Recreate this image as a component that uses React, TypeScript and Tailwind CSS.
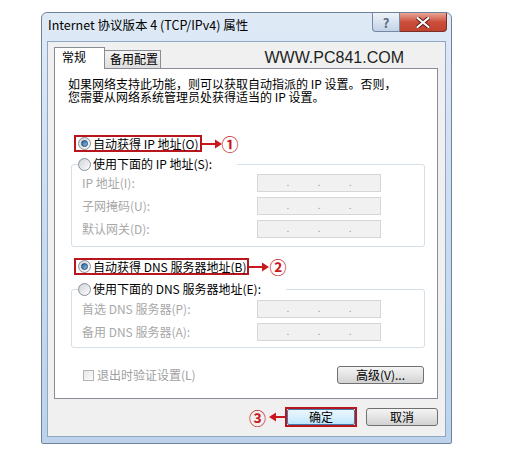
import React from "react";

function Radio({ checked }: { checked?: boolean }) {
  return (
    <span className="flex h-[13px] w-[13px] shrink-0 items-center justify-center rounded-full border border-[#8c8f94] bg-gradient-to-br from-[#cfd3d8] to-[#fdfdfd]">
      {checked && (
        <span className="h-[7px] w-[7px] rounded-full border border-[#1c4a78] bg-gradient-to-br from-[#2a5f94] to-[#8cc6f0]" />
      )}
    </span>
  );
}

function IpField() {
  return (
    <div className="flex h-[18px] w-[124px] items-end border border-[#d6d6d6] bg-[#f1f1f1] pb-[4px] text-[10px] leading-none text-[#9c9c9c]">
      <span className="flex-1" />
      <span>.</span>
      <span className="flex-1" />
      <span>.</span>
      <span className="flex-1" />
      <span>.</span>
      <span className="flex-1" />
    </div>
  );
}

function Row({ label }: { label: string }) {
  return (
    <div className="flex h-[18px] items-center">
      <span className="w-[179px] pl-[4px] text-[12px] leading-none text-[#a8a8a8]">{label}</span>
      <IpField />
    </div>
  );
}

function ArrowRight() {
  return (
    <svg width="20" height="10" viewBox="0 0 20 10" className="shrink-0">
      <line x1="0" y1="5" x2="14" y2="5" stroke="#c8191f" strokeWidth="2" />
      <polygon points="13,0.5 20,5 13,9.5" fill="#c8191f" />
    </svg>
  );
}

function ArrowLeft() {
  return (
    <svg width="16" height="10" viewBox="0 0 16 10" className="shrink-0">
      <polygon points="7,0.5 0,5 7,9.5" fill="#c8191f" />
      <line x1="6" y1="5" x2="16" y2="5" stroke="#c8191f" strokeWidth="2" />
    </svg>
  );
}

function WinButton({ children, w }: { children: React.ReactNode; w: string }) {
  return (
    <div
      className={`flex h-[18px] ${w} items-center justify-center rounded-[3px] border border-[#707070] bg-gradient-to-b from-[#f4f4f4] via-[#e4e4e4] to-[#d2d2d2] text-[12px] leading-none text-black`}
    >
      {children}
    </div>
  );
}

export default function App() {
  return (
    <div className="h-[450px] w-[520px] bg-white pl-[41px] pt-[12px] font-['Noto_Sans_CJK_SC',sans-serif]">
      <div className="flex h-[432px] w-[411px] flex-col rounded-t-[6px] rounded-b-[2px] border border-[#70829a] bg-gradient-to-b from-[#dfeaf6] via-[#c9dcf1] to-[#bdd3ec]">
        {/* title bar */}
        <div className="flex h-[28px] shrink-0 items-start justify-between pl-[6px] pr-[4px]">
          <div className="pt-[4px] text-[12.5px] leading-[16px] text-black">
            Internet 协议版本 4 (TCP/IPv4) 属性
          </div>
          <div className="flex">
            <div className="flex h-[19px] w-[28px] items-center justify-center rounded-bl-[4px] border border-t-0 border-[#7489a6] bg-gradient-to-b from-[#eef3fa] to-[#c3d2e6] text-[13px] font-bold leading-none text-[#5a6a82]">
              ?
            </div>
            <div className="flex h-[19px] w-[47px] items-center justify-center rounded-br-[4px] border border-t-0 border-l-0 border-[#7a2f28] bg-gradient-to-b from-[#e8a597] via-[#cc4c3b] to-[#c0432f]">
              <svg width="14" height="11" viewBox="0 0 14 11">
                <path
                  d="M1.5 1 L12.5 10 M12.5 1 L1.5 10"
                  stroke="#5a1d17"
                  strokeWidth="4"
                  strokeLinecap="round"
                />
                <path
                  d="M1.5 1 L12.5 10 M12.5 1 L1.5 10"
                  stroke="#ffffff"
                  strokeWidth="2.2"
                  strokeLinecap="round"
                />
              </svg>
            </div>
          </div>
        </div>

        {/* client area */}
        <div className="mx-[5px] mb-[6px] flex flex-1 flex-col border border-[#90a6c3] bg-[#f0f0f0] pl-[6px] pr-[7px] pt-[5px]">
          {/* tabs */}
          <div className="flex h-[21px] items-end">
            <div className="relative z-10 -mb-px h-[22px] w-[51px] border border-b-0 border-[#898c95] bg-white pl-[7px] pt-[2px] text-[12px] leading-[14px] text-black">
              常规
            </div>
            <div className="-ml-px h-[18px] w-[57px] border border-b-0 border-[#898c95] bg-gradient-to-b from-[#f4f4f4] to-[#dedede] pl-[5px] pt-[1px] text-[12px] leading-[14px] text-black">
              备用配置
            </div>
            <div className="ml-auto mr-[34px] self-center font-['Liberation_Sans',sans-serif] text-[16px] leading-none text-[#1e1e1e]">
              WWW.PC841.COM
            </div>
          </div>

          {/* panel */}
          <div className="flex h-[331px] flex-col border border-[#898c95] bg-white pl-[13px] pr-[12px]">
            <div className="mt-[8px] flex flex-col whitespace-nowrap text-[12px] text-black">
              <div className="h-[13px] leading-[13px]">如果网络支持此功能，则可以获取自动指派的 IP 设置。否则，</div>
              <div className="h-[13px] leading-[13px]">您需要从网络系统管理员处获得适当的 IP 设置。</div>
            </div>

            <div className="ml-[6px] mt-[32px] flex items-center">
              <div className="flex h-[17px] items-center gap-[2px] border-2 border-[#b8161c] pl-[2px] pr-[1px] text-[12px] leading-none text-black">
                <Radio checked />
                <span>自动获得 IP 地址(O)</span>
              </div>
              <ArrowRight />
              <span className="text-[17px] font-bold leading-none text-[#c8191f]">①</span>
            </div>

            <fieldset className="ml-[3px] mt-[4px] rounded-[3px] border border-[#d5dfe5] pb-[8px] pl-[6px]">
              <legend className="pr-[25px]">
                <span className="flex h-[16px] items-center gap-[2px] text-[12px] leading-none text-black">
                  <Radio />
                  <span>使用下面的 IP 地址(S):</span>
                </span>
              </legend>
              <div className="mt-[2px] flex flex-col gap-[5px]">
                <Row label="IP 地址(I):" />
                <Row label="子网掩码(U):" />
                <Row label="默认网关(D):" />
              </div>
            </fieldset>

            <div className="ml-[6px] mt-[11px] flex items-center">
              <div className="flex h-[17px] items-center gap-[2px] border-2 border-[#b8161c] pl-[2px] pr-[1px] text-[12px] leading-none text-black">
                <Radio checked />
                <span>自动获得 DNS 服务器地址(B)</span>
              </div>
              <ArrowRight />
              <span className="text-[17px] font-bold leading-none text-[#c8191f]">②</span>
            </div>

            <fieldset className="ml-[3px] mt-[6px] rounded-[3px] border border-[#d5dfe5] pb-[6px] pl-[6px]">
              <legend className="pr-[25px]">
                <span className="flex h-[16px] items-center gap-[2px] text-[12px] leading-none text-black">
                  <Radio />
                  <span>使用下面的 DNS 服务器地址(E):</span>
                </span>
              </legend>
              <div className="mt-[3px] flex flex-col gap-[5px]">
                <Row label="首选 DNS 服务器(P):" />
                <Row label="备用 DNS 服务器(A):" />
              </div>
            </fieldset>

            <div className="mt-[18px] flex h-[18px] items-center justify-between">
              <div className="ml-[15px] flex items-center gap-[3px]">
                <span className="h-[11px] w-[11px] border border-[#b4b4b4] bg-gradient-to-br from-[#e8e8e8] to-[#fbfbfb]" />
                <span className="text-[12px] leading-none text-[#a0a0a0]">退出时验证设置(L)</span>
              </div>
              <div className="mr-[1px]">
                <WinButton w="w-[87px]">高级(V)...</WinButton>
              </div>
            </div>
          </div>

          {/* bottom buttons */}
          <div className="mt-[8px] flex h-[20px] items-center justify-end">
            <span className="mr-[3px] text-[17px] font-bold leading-none text-[#c8191f]">③</span>
            <ArrowLeft />
            <div className="flex h-[20px] w-[72px] items-center justify-center border-2 border-[#b8161c]">
              <div className="flex h-[16px] w-[68px] items-center justify-center rounded-[2px] border border-[#3c7fb1] bg-gradient-to-b from-[#eaf6fd] via-[#d9f0fc] to-[#bee6fd] text-[12px] leading-none text-black">
                确定
              </div>
            </div>
            <div className="ml-[9px]">
              <WinButton w="w-[72px]">取消</WinButton>
            </div>
          </div>
        </div>
      </div>
    </div>
  );
}
